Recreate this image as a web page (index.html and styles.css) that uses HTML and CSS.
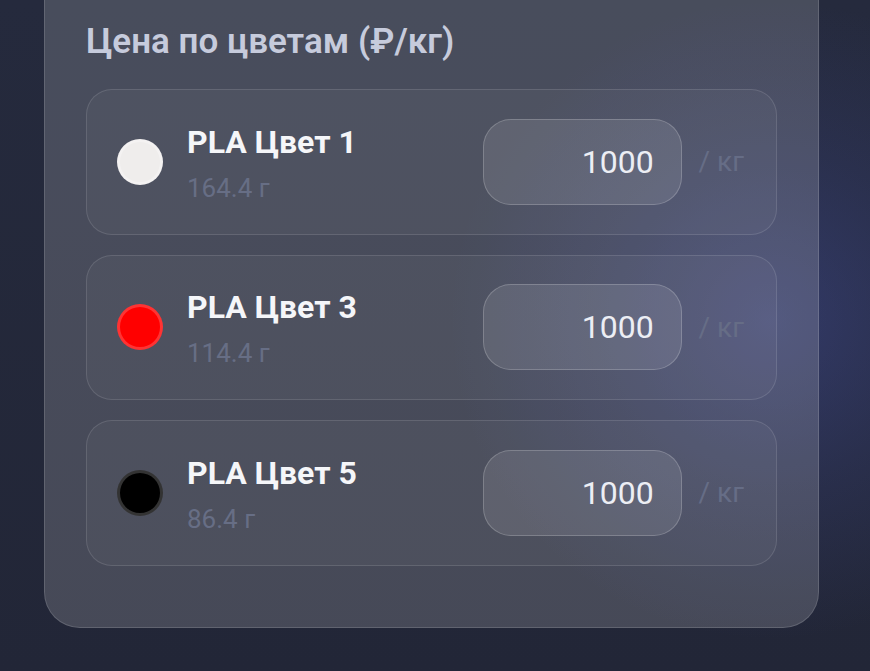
FILE: index.html
```html
<!DOCTYPE html>
<html lang="ru">
<head>
<meta charset="utf-8">
<title>Цена по цветам</title>
<link rel="stylesheet" href="styles.css">
</head>
<body>
<main class="page">
  <section class="panel">
    <h2 class="panel-title">Цена по цветам (₽/кг)</h2>
    <div class="rows">
      <div class="row">
        <span class="dot dot-white"></span>
        <div class="info">
          <div class="name">PLA Цвет 1</div>
          <div class="weight">164.4 г</div>
        </div>
        <div class="price"><input class="price-input" type="text" value="1000"></div>
        <span class="unit">/ кг</span>
      </div>
      <div class="row">
        <span class="dot dot-red"></span>
        <div class="info">
          <div class="name">PLA Цвет 3</div>
          <div class="weight">114.4 г</div>
        </div>
        <div class="price"><input class="price-input" type="text" value="1000"></div>
        <span class="unit">/ кг</span>
      </div>
      <div class="row">
        <span class="dot dot-black"></span>
        <div class="info">
          <div class="name">PLA Цвет 5</div>
          <div class="weight">86.4 г</div>
        </div>
        <div class="price"><input class="price-input" type="text" value="1000"></div>
        <span class="unit">/ кг</span>
      </div>
    </div>
  </section>
</main>
</body>
</html>
```
FILE: styles.css
```css
* { box-sizing: border-box; }
html, body { margin: 0; padding: 0; }
body {
  width: 870px;
  height: 671px;
  overflow: hidden;
  font-family: Roboto, "Noto Sans", "Liberation Sans", sans-serif;
  background-color: #222638;
  background-image:
    radial-gradient(circle at 770px 320px, rgba(80, 92, 190, 0.34) 0, rgba(80, 92, 190, 0.14) 170px, rgba(80, 92, 190, 0) 320px),
    linear-gradient(180deg, #252a3d 0%, #222637 100%);
}
.page {
  padding-left: 44px;
}
.panel {
  width: 775px;
  margin-top: -40px;
  padding: 61px 41px 61px 41px;
  background: rgba(255, 255, 255, 0.165);
  border: 1px solid rgba(255, 255, 255, 0.14);
  border-radius: 36px;
}
.panel-title {
  margin: 0 0 27px 0;
  font-size: 35px;
  line-height: 40px;
  font-weight: 600;
  color: #c6cbdc;
}
.rows {
  display: flex;
  flex-direction: column;
  gap: 20px;
}
.row {
  display: flex;
  align-items: center;
  height: 145.5px;
  padding: 0 32px 0 30px;
  background: rgba(255, 255, 255, 0.035);
  border: 1px solid rgba(255, 255, 255, 0.12);
  border-radius: 26px;
}
.dot {
  flex: none;
  width: 46px;
  height: 46px;
  border-radius: 50%;
  border: 3px solid rgba(255, 255, 255, 0.2);
}
.dot-white { background: #efedec; border-color: rgba(255,255,255,0.3); }
.dot-red { background: #ff0000; }
.dot-black { background: #000000; }
.info {
  flex: 1;
  margin-left: 24px;
  padding-top: 2px;
  display: flex;
  flex-direction: column;
  gap: 12px;
}
.name {
  font-size: 32px;
  line-height: 38px;
  font-weight: 700;
  color: #f5f6f9;
}
.weight {
  font-size: 26px;
  line-height: 30px;
  color: #676e85;
}
.price {
  flex: none;
}
.price-input {
  display: block;
  width: 199px;
  height: 86px;
  padding: 0 27px 0 16px;
  font-family: Roboto, "Noto Sans", "Liberation Sans", sans-serif;
  font-size: 32px;
  color: #eceef4;
  text-align: right;
  background: rgba(255, 255, 255, 0.1);
  border: 1.5px solid rgba(255, 255, 255, 0.2);
  border-radius: 28px;
  outline: none;
}
.unit {
  flex: none;
  margin-left: 17px;
  font-size: 28px;
  color: #666d86;
}
```
